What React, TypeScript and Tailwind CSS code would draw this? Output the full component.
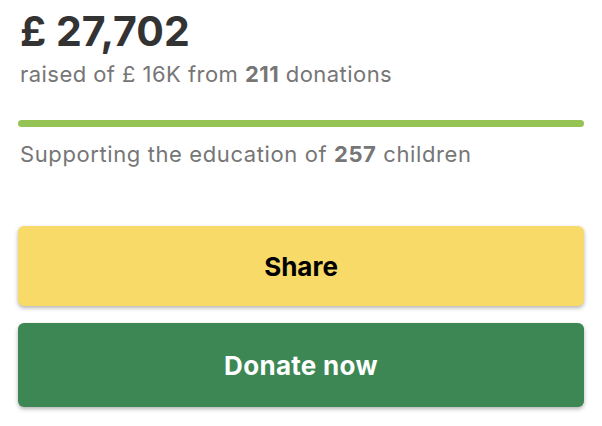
export default function App() {
  return (
    <div className="w-[602px] h-[426px] bg-white px-[18px] pt-[6px]" style={{ fontFamily: "Inter, 'Open Sans', sans-serif" }}>
      <div className="pl-[2px] text-[41px] leading-[50px] font-bold text-[#333333]">£ 27,702</div>
      <div className="pl-[2px] mt-[5px] text-[22px] leading-[26px] tracking-[0.45px] text-[#767676]">
        raised of £ 16K from <span className="font-bold">211</span> donations
      </div>
      <div className="mt-[33px] h-[7px] rounded-full bg-[#96c454]" />
      <div className="pl-[2px] mt-[12px] text-[22px] leading-[30px] tracking-[0.6px] text-[#767676]">
        Supporting the education of <span className="font-bold">257</span> children
      </div>
      <div className="mt-[57px] flex flex-col gap-[17px]">
        <button className="h-[80px] w-full rounded-[6px] bg-[#f8da69] text-[26px] font-bold text-black shadow-[0_2px_4px_rgba(0,0,0,0.3)]">
          Share
        </button>
        <button className="h-[84px] w-full rounded-[6px] bg-[#3c8754] text-[26px] font-bold tracking-[0.3px] text-white shadow-[0_2px_4px_rgba(0,0,0,0.3)]">
          Donate now
        </button>
      </div>
    </div>
  );
}
